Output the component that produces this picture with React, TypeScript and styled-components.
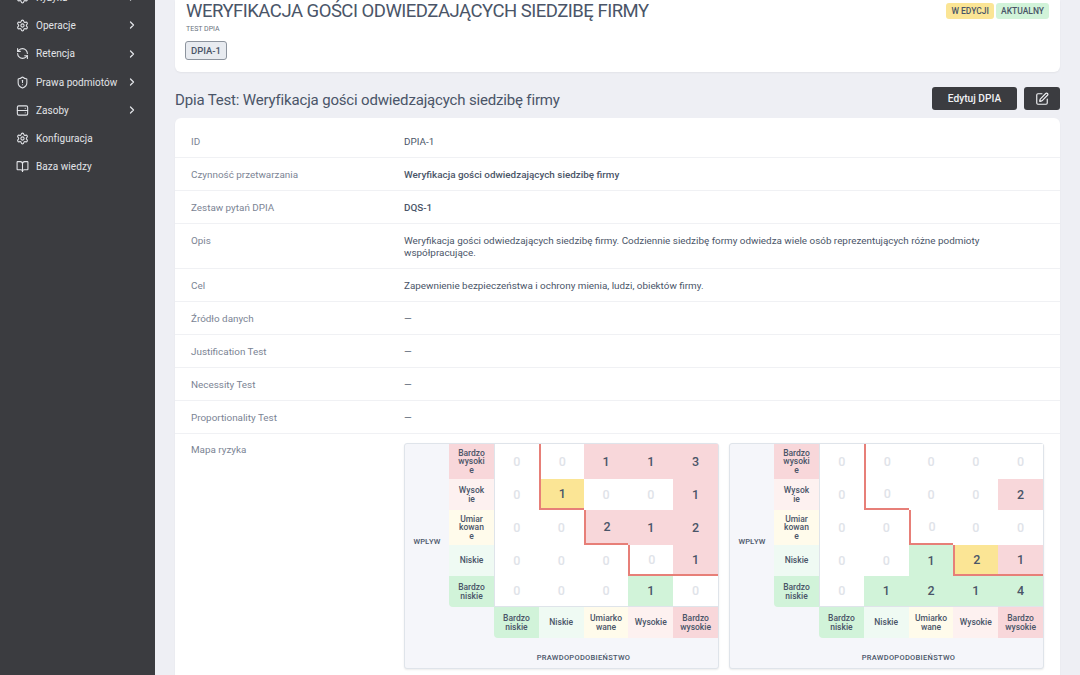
import { Fragment } from "react";
import { BookOpen, ChevronRight, RefreshCcw, Settings, ShieldAlert, SquarePen } from "lucide-react";
import styled, { createGlobalStyle } from "styled-components";

const GlobalStyle = createGlobalStyle`
  html, body {
    margin: 0;
    height: 100%;
    overflow: hidden;
    background: #eeeff4;
    font-family: Roboto, "Noto Sans", sans-serif;
    color: #4a5568;
  }
`;

const Page = styled.div`
  display: flex;
  height: 675px;
  overflow: hidden;
`;
const Sidebar = styled.aside`
  width: 155px;
  flex-shrink: 0;
  background: #3b3c40;
  box-sizing: border-box;
  padding: 0 17px 0 16px;
  color: #e2e4e8;
  overflow: hidden;
`;
const NavList = styled.nav`
  display: flex;
  flex-direction: column;
  margin-top: -17px;
`;
const NavItem = styled.div`
  display: flex;
  align-items: center;
  height: 28.3px;
  font-size: 10px;
  letter-spacing: 0.05px;
  gap: 7px;

  span {
    flex: 1;
    white-space: nowrap;
  }
  svg {
    flex-shrink: 0;
  }
`;
const Main = styled.main`
  flex: 1;
  min-width: 0;
  box-sizing: border-box;
  padding: 0 20px;
`;
const HeadCard = styled.section`
  display: flex;
  justify-content: space-between;
  align-items: flex-start;
  height: 72px;
  box-sizing: border-box;
  padding: 0 11px;
  background: #fff;
  border-radius: 0 0 6px 6px;
  box-shadow: 0 1px 2px rgba(0, 0, 0, 0.05);
`;
const HeadTitle = styled.h1`
  margin: 0;
  font-size: 18.5px;
  line-height: 23px;
  letter-spacing: -0.5px;
  font-weight: 400;
  color: #4a5568;
`;
const HeadSub = styled.div`
  font-size: 7px;
  line-height: 10px;
  margin-top: 1px;
  color: #6b7280;
`;
const Tag = styled.span`
  display: inline-block;
  margin-top: 7px;
  margin-left: -1px;
  padding: 0 5px;
  line-height: 17px;
  font-size: 9.5px;
  font-weight: 500;
  background: #e8ebf0;
  border: 1px solid #8d949e;
  border-radius: 3px;
`;
const Badges = styled.div`
  display: flex;
  gap: 2px;
  margin-top: 3px;
`;
const Badge = styled.span<{ $tone: "yellow" | "green" }>`
  padding: 0 5px;
  line-height: 16px;
  font-size: 8.5px;
  font-weight: 500;
  border-radius: 3px;
  background: ${(props) => (props.$tone === "yellow" ? "#fbe595" : "#d1f3d9")};
`;
const SectionHeader = styled.div`
  display: flex;
  justify-content: space-between;
  align-items: flex-start;
  height: 46px;
  box-sizing: border-box;
  padding-top: 15px;
`;
const SectionTitle = styled.h2`
  margin: 0;
  font-size: 15px;
  line-height: 26px;
  letter-spacing: -0.17px;
  font-weight: 400;
  color: #4a5568;
`;
const Actions = styled.div`
  display: flex;
  gap: 7px;
`;
const DarkButton = styled.button<{ $square?: boolean }>`
  display: flex;
  align-items: center;
  justify-content: center;
  height: 23px;
  width: ${(props) => (props.$square ? "36px" : "85px")};
  padding: 0;
  box-sizing: border-box;
  border: 0;
  border-radius: 3px;
  background: #3b3c40;
  color: #f0f1f4;
  font-family: inherit;
  font-size: 10.2px;
  font-weight: 500;

  svg {
    flex-shrink: 0;
  }
`;
const DetailsCard = styled.section`
  background: #fff;
  border-radius: 6px 6px 0 0;
  box-shadow: 0 1px 2px rgba(0, 0, 0, 0.05);
  padding-top: 7px;
`;
const Row = styled.div`
  display: grid;
  grid-template-columns: 213px 1fr;
  padding: 11px 16px 9.5px;
  border-bottom: 1px solid #f0f1f4;
  font-size: 9.9px;
  line-height: 11.5px;

  &:last-child {
    border-bottom: 0;
    padding-top: 10.5px;
  }
`;
const Label = styled.div`
  color: #7b8494;
`;
const Value = styled.div<{ $strong?: boolean }>`
  font-weight: ${(props) => (props.$strong ? 500 : 400)};
  color: #4a5568;
`;
const Maps = styled.div`
  display: flex;
  gap: 10px;
`;
const Matrix = styled.div`
  display: grid;
  width: 315px;
  box-sizing: border-box;
  grid-template-columns: 44px 45px repeat(5, 44.8px);
  grid-template-rows: 35px 31px 35px 31px 31px 31px 30px;
  background: #f5f6fa;
  border: 1px solid #dfe4ea;
  border-radius: 3px;
  box-shadow: 0 1px 2px rgba(0, 0, 0, 0.08);
  margin-top: -1px;
`;
const AxisY = styled.div`
  grid-column: 1;
  grid-row: 1 / 6;
  display: flex;
  align-items: center;
  justify-content: center;
  padding-top: 32px;
  font-size: 7.5px;
  font-weight: 500;
`;
const AxisX = styled.div`
  grid-column: 2 / 8;
  grid-row: 7;
  display: flex;
  align-items: center;
  justify-content: center;
  padding-top: 9px;
  font-size: 7.5px;
  font-weight: 500;
  letter-spacing: 0.3px;
`;
const AxisCell = styled.div<{ $bg: string; $rounded?: string; $inset: number }>`
  display: flex;
  align-items: center;
  justify-content: center;
  box-sizing: border-box;
  padding: 0 ${(props) => props.$inset}px;
  text-align: center;
  overflow-wrap: anywhere;
  font-size: 8.5px;
  font-weight: 500;
  line-height: 8.5px;
  background: ${(props) => props.$bg};
  border-radius: ${(props) => props.$rounded ?? "0"};
`;
const Cell = styled.div<{ $bg: string; $empty: boolean; $left?: boolean; $bottom?: boolean; $first?: boolean; $last?: boolean }>`
  display: flex;
  align-items: center;
  justify-content: center;
  box-sizing: border-box;
  background: ${(props) => props.$bg};
  font-size: 12.5px;
  font-weight: 500;
  color: ${(props) => (props.$empty ? "#dfe3e9" : "#4a5568")};
  border-left: ${(props) => (props.$left ? "2px solid #e77f78" : props.$first ? "1px solid #dfe4ea" : "0")};
  border-bottom: ${(props) => (props.$bottom ? "2px solid #e77f78" : props.$last ? "1px solid #dfe4ea" : "0")};
`;

const RED = "#f8d7da";
const PALE_RED = "#fdf1f0";
const PALE_YELLOW = "#fffbeb";
const PALE_GREEN = "#effaf3";
const GREEN = "#d1f3d9";
const YELLOW = "#fbe595";
const WHITE = "#ffffff";

const impactLabels = [
  { text: "Bardzo wysokie", bg: RED },
  { text: "Wysokie", bg: PALE_RED },
  { text: "Umiarkowane", bg: PALE_YELLOW },
  { text: "Niskie", bg: PALE_GREEN },
  { text: "Bardzo niskie", bg: GREEN },
];
const likelihoodLabels = [
  { text: "Bardzo niskie", bg: GREEN },
  { text: "Niskie", bg: PALE_GREEN },
  { text: "Umiarkowane", bg: PALE_YELLOW },
  { text: "Wysokie", bg: PALE_RED },
  { text: "Bardzo wysokie", bg: RED },
];

// red step line: "row-col" keys
const leftEdges = ["0-1", "1-1", "2-2", "3-3"];
const bottomEdges = ["1-1", "2-2", "3-3", "3-4"];

const firstMap = {
  values: [
    [0, 0, 1, 1, 3],
    [0, 1, 0, 0, 1],
    [0, 0, 2, 1, 2],
    [0, 0, 0, 0, 1],
    [0, 0, 0, 1, 0],
  ],
  colors: [
    [WHITE, WHITE, RED, RED, RED],
    [WHITE, YELLOW, WHITE, WHITE, RED],
    [WHITE, WHITE, RED, RED, RED],
    [WHITE, WHITE, WHITE, WHITE, RED],
    [WHITE, WHITE, WHITE, GREEN, WHITE],
  ],
};
const secondMap = {
  values: [
    [0, 0, 0, 0, 0],
    [0, 0, 0, 0, 2],
    [0, 0, 0, 0, 0],
    [0, 0, 1, 2, 1],
    [0, 1, 2, 1, 4],
  ],
  colors: [
    [WHITE, WHITE, WHITE, WHITE, WHITE],
    [WHITE, WHITE, WHITE, WHITE, RED],
    [WHITE, WHITE, WHITE, WHITE, WHITE],
    [WHITE, WHITE, GREEN, YELLOW, RED],
    [WHITE, GREEN, GREEN, GREEN, GREEN],
  ],
};

interface RiskMapProps {
  values: number[][];
  colors: string[][];
}

function RiskMap({ values, colors }: RiskMapProps) {
  return (
    <Matrix>
      <AxisY>WPŁYW</AxisY>
      {values.map((line, row) => (
        <Fragment key={row}>
          <AxisCell $inset={9.1} $bg={impactLabels[row].bg} $rounded={row === 4 ? "0 0 0 4px" : undefined}>
            {impactLabels[row].text}
          </AxisCell>
          {line.map((value, col) => (
            <Cell
              key={col}
              $bg={colors[row][col]}
              $empty={value === 0}
              $first={col === 0}
              $last={row === 4}
              $left={leftEdges.includes(`${row}-${col}`)}
              $bottom={bottomEdges.includes(`${row}-${col}`)}
            >
              {value}
            </Cell>
          ))}
        </Fragment>
      ))}
      <div />
      <div />
      {likelihoodLabels.map((label, col) => (
        <AxisCell key={col} $inset={5} $bg={label.bg} $rounded={col === 0 ? "0 0 0 4px" : undefined}>
          {label.text}
        </AxisCell>
      ))}
      <AxisX>PRAWDOPODOBIEŃSTWO</AxisX>
    </Matrix>
  );
}

function ServerIcon() {
  return (
    <svg width="13" height="13" viewBox="0 0 24 24" fill="none" stroke="currentColor" strokeWidth="2" strokeLinecap="round">
      <rect x="2.5" y="3.5" width="19" height="17" rx="2.5" />
      <path d="M2.5 12h19M17 8h.01M17 16h.01" />
    </svg>
  );
}

const navItems = [
  { icon: <Settings size={13} />, text: "Ryzyka", arrow: true },
  { icon: <Settings size={13} />, text: "Operacje", arrow: true },
  { icon: <RefreshCcw size={13} />, text: "Retencja", arrow: true },
  { icon: <ShieldAlert size={13} />, text: "Prawa podmiotów", arrow: true },
  { icon: <ServerIcon />, text: "Zasoby", arrow: true },
  { icon: <Settings size={13} />, text: "Konfiguracja", arrow: false },
  { icon: <BookOpen size={13} />, text: "Baza wiedzy", arrow: false },
];

const details = [
  { label: "ID", value: "DPIA-1" },
  { label: "Czynność przetwarzania", value: "Weryfikacja gości odwiedzających siedzibę firmy", strong: true },
  { label: "Zestaw pytań DPIA", value: "DQS-1", strong: true },
  {
    label: "Opis",
    value:
      "Weryfikacja gości odwiedzających siedzibę firmy. Codziennie siedzibę formy odwiedza wiele osób reprezentujących różne podmioty współpracujące.",
  },
  { label: "Cel", value: "Zapewnienie bezpieczeństwa i ochrony mienia, ludzi, obiektów firmy." },
  { label: "Źródło danych", value: "—" },
  { label: "Justification Test", value: "—" },
  { label: "Necessity Test", value: "—" },
  { label: "Proportionality Test", value: "—" },
];

function App() {
  return (
    <Page>
      <GlobalStyle />
      <Sidebar>
        <NavList>
          {navItems.map((item) => (
            <NavItem key={item.text}>
              {item.icon}
              <span>{item.text}</span>
              {item.arrow && <ChevronRight size={12} strokeWidth={2.5} />}
            </NavItem>
          ))}
        </NavList>
      </Sidebar>
      <Main>
        <HeadCard>
          <div>
            <HeadTitle>WERYFIKACJA GOŚCI ODWIEDZAJĄCYCH SIEDZIBĘ FIRMY</HeadTitle>
            <HeadSub>TEST DPIA</HeadSub>
            <Tag>DPIA-1</Tag>
          </div>
          <Badges>
            <Badge $tone="yellow">W EDYCJI</Badge>
            <Badge $tone="green">AKTUALNY</Badge>
          </Badges>
        </HeadCard>
        <SectionHeader>
          <SectionTitle>Dpia Test: Weryfikacja gości odwiedzających siedzibę firmy</SectionTitle>
          <Actions>
            <DarkButton>Edytuj DPIA</DarkButton>
            <DarkButton $square>
              <SquarePen size={14} />
            </DarkButton>
          </Actions>
        </SectionHeader>
        <DetailsCard>
          {details.map((item) => (
            <Row key={item.label}>
              <Label>{item.label}</Label>
              <Value $strong={item.strong}>{item.value}</Value>
            </Row>
          ))}
          <Row>
            <Label>Mapa ryzyka</Label>
            <Maps>
              <RiskMap {...firstMap} />
              <RiskMap {...secondMap} />
            </Maps>
          </Row>
        </DetailsCard>
      </Main>
    </Page>
  );
}

export default App;
